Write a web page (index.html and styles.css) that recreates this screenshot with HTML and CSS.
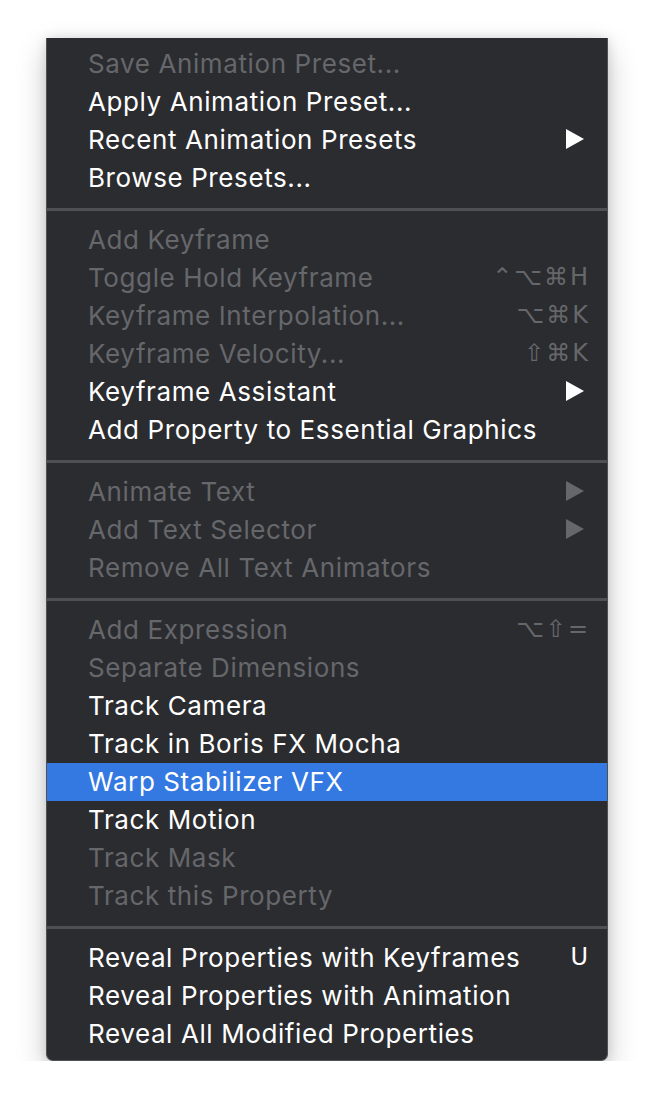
FILE: index.html
```
<!DOCTYPE html>
<html>
<head>
<meta charset="utf-8">
<link rel="stylesheet" href="styles.css">
</head>
<body>
<div class="menu">
  <div class="section">
    <div class="item off"><span class="label">Save Animation Preset...</span></div>
    <div class="item"><span class="label">Apply Animation Preset...</span></div>
    <div class="item"><span class="label">Recent Animation Presets</span><svg class="arrow" viewBox="0 0 18 20"><polygon points="0,0 18,10 0,20"/></svg></div>
    <div class="item"><span class="label">Browse Presets...</span></div>
  </div>
  <div class="sep"></div>
  <div class="section">
    <div class="item off"><span class="label">Add Keyframe</span></div>
    <div class="item off"><span class="label">Toggle Hold Keyframe</span><span class="key">⌃⌥⌘H</span></div>
    <div class="item off"><span class="label">Keyframe Interpolation...</span><span class="key">⌥⌘K</span></div>
    <div class="item off"><span class="label">Keyframe Velocity...</span><span class="key">⇧⌘K</span></div>
    <div class="item"><span class="label">Keyframe Assistant</span><svg class="arrow" viewBox="0 0 18 20"><polygon points="0,0 18,10 0,20"/></svg></div>
    <div class="item"><span class="label">Add Property to Essential Graphics</span></div>
  </div>
  <div class="sep"></div>
  <div class="section">
    <div class="item off"><span class="label">Animate Text</span><svg class="arrow" viewBox="0 0 18 20"><polygon points="0,0 18,10 0,20"/></svg></div>
    <div class="item off"><span class="label">Add Text Selector</span><svg class="arrow" viewBox="0 0 18 20"><polygon points="0,0 18,10 0,20"/></svg></div>
    <div class="item off"><span class="label">Remove All Text Animators</span></div>
  </div>
  <div class="sep"></div>
  <div class="section">
    <div class="item off"><span class="label">Add Expression</span><span class="key">⌥⇧=</span></div>
    <div class="item off"><span class="label">Separate Dimensions</span></div>
    <div class="item"><span class="label">Track Camera</span></div>
    <div class="item"><span class="label">Track in Boris FX Mocha</span></div>
    <div class="item active"><span class="label">Warp Stabilizer VFX</span></div>
    <div class="item"><span class="label">Track Motion</span></div>
    <div class="item off"><span class="label">Track Mask</span></div>
    <div class="item off"><span class="label">Track this Property</span></div>
  </div>
  <div class="sep"></div>
  <div class="section">
    <div class="item"><span class="label">Reveal Properties with Keyframes</span><span class="key">U</span></div>
    <div class="item"><span class="label">Reveal Properties with Animation</span></div>
    <div class="item"><span class="label">Reveal All Modified Properties</span></div>
  </div>
</div>
</body>
</html>
```
FILE: styles.css
```
html, body {
  margin: 0;
  padding: 0;
  background: #ffffff;
}
body {
  padding-top: 38px;
  padding-left: 46px;
  font-family: Inter, "Noto Sans", "DejaVu Sans", sans-serif;
}
.menu {
  width: 560px;
  background: #2b2c30;
  border: 1px solid #505154;
  border-top: none;
  border-radius: 0 0 7px 7px;
  padding: 7px 0 7px 0;
  box-shadow: 0 12px 30px rgba(0, 0, 0, 0.22), 0 0 12px rgba(0, 0, 0, 0.12);
}
.sep {
  height: 3px;
  background: #4f5054;
  margin: 11px 0 10px 0;
}
.item {
  box-sizing: border-box;
  height: 38px;
  display: flex;
  align-items: center;
  padding: 0 18px 2px 41px;
  color: #ffffff;
  font-size: 26px;
  letter-spacing: 0.6px;
}
.item.off {
  color: #66676b;
}
.item.active {
  background: #3478e2;
}
.label {
  flex: 1;
  white-space: nowrap;
}
.key {
  font-family: "DejaVu Sans", sans-serif;
  font-size: 24px;
  letter-spacing: 2px;
  margin-right: -1px;
}
.arrow {
  width: 18px;
  height: 20px;
  margin-right: 5px;
  fill: currentColor;
}
```
